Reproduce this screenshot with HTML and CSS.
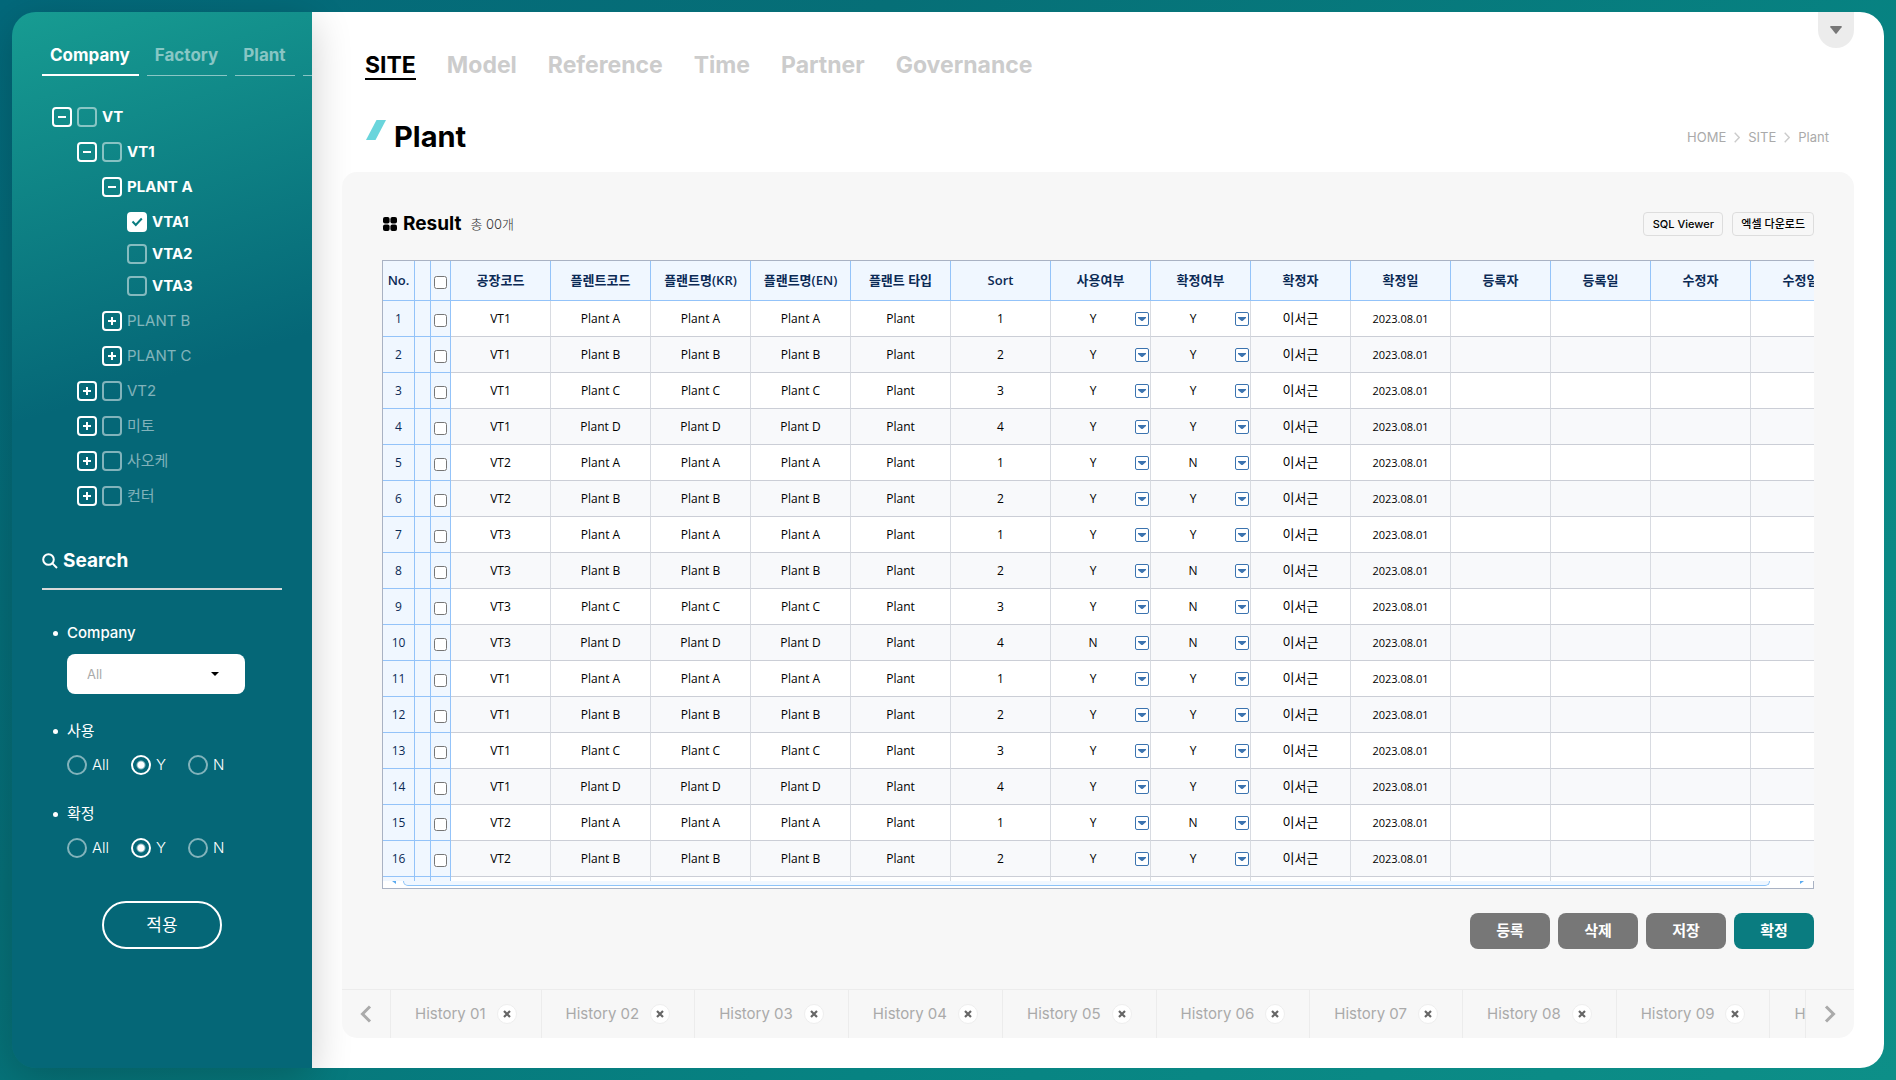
FILE: index.html
```html
<!DOCTYPE html>
<html lang="ko">
<head>
<meta charset="utf-8">
<meta name="viewport" content="width=device-width, initial-scale=1">
<title>Plant</title>
<link rel="stylesheet" href="styles.css">
</head>
<body>
<div class="frame">
  <aside class="sidebar">
    <nav class="side-tabs">
      <a class="side-tab active" href="#">Company</a>
      <a class="side-tab" href="#">Factory</a>
      <a class="side-tab" href="#">Plant</a>
      <a class="side-tab next" href="#" aria-label="Next"></a>
    </nav>

    <ul class="tree">
      <li class="node open"><button class="toggle minus" aria-label="VT"></button><label><input type="checkbox" class="box">VT</label></li>
      <li class="node open lv1"><button class="toggle minus" aria-label="VT1"></button><label><input type="checkbox" class="box">VT1</label></li>
      <li class="node open lv2"><button class="toggle minus" aria-label="PLANT A"></button><span>PLANT A</span></li>
      <li class="leaves">
        <label class="node open"><input type="checkbox" class="box" checked>VTA1</label>
        <label class="node open"><input type="checkbox" class="box">VTA2</label>
        <label class="node open"><input type="checkbox" class="box">VTA3</label>
      </li>
      <li class="node lv2"><button class="toggle plus" aria-label="PLANT B"></button><span>PLANT B</span></li>
      <li class="node lv2"><button class="toggle plus" aria-label="PLANT C"></button><span>PLANT C</span></li>
      <li class="node lv1"><button class="toggle plus" aria-label="VT2"></button><label><input type="checkbox" class="box">VT2</label></li>
      <li class="node lv1"><button class="toggle plus" aria-label="미토"></button><label><input type="checkbox" class="box">미토</label></li>
      <li class="node lv1"><button class="toggle plus" aria-label="사오케"></button><label><input type="checkbox" class="box">사오케</label></li>
      <li class="node lv1"><button class="toggle plus" aria-label="컨터"></button><label><input type="checkbox" class="box">컨터</label></li>
    </ul>

    <form class="search">
      <h2 class="search-title">
        <svg width="16" height="16" viewBox="0 0 16 16" fill="none" stroke="#fff" stroke-width="2"><circle cx="6.5" cy="6.5" r="5.3"/><path d="M10.4 10.4 15 15"/></svg>
        Search
      </h2>
      <div class="field">
        <label class="field-name" for="company">Company</label>
        <select id="company" class="select"><option>All</option></select>
      </div>
      <fieldset class="field group">
        <legend class="field-name ko">사용</legend>
        <div class="radios">
          <label><input type="radio" name="use">All</label>
          <label><input type="radio" name="use" checked>Y</label>
          <label><input type="radio" name="use">N</label>
        </div>
      </fieldset>
      <fieldset class="field group">
        <legend class="field-name ko">확정</legend>
        <div class="radios">
          <label><input type="radio" name="confirm">All</label>
          <label><input type="radio" name="confirm" checked>Y</label>
          <label><input type="radio" name="confirm">N</label>
        </div>
      </fieldset>
      <button type="button" class="apply">적용</button>
    </form>
  </aside>

  <main class="main">
    <button class="pull" aria-label="menu"><svg width="12" height="8" viewBox="0 0 12 8"><path d="M.8 0h10.4q1 .3.4 1.2L6.6 7.6q-.6.6-1.2 0L.4 1.200Q-.2.3.8 0z" fill="#777"/></svg></button>
    <nav class="top-nav">
      <a class="active" href="#">SITE</a>
      <a href="#">Model</a>
      <a href="#">Reference</a>
      <a href="#">Time</a>
      <a href="#">Partner</a>
      <a href="#">Governance</a>
    </nav>
    <header class="title-row">
      <h1>
        <svg width="20" height="20" viewBox="0 0 20 20"><path d="M10.500 0H20L9.500 20H0z" fill="#6ad5dc"/></svg>
        Plant
      </h1>
      <nav class="crumbs">
        <a href="#">HOME</a>
        <svg width="6" height="11" viewBox="0 0 6 11" fill="none" stroke="#ccc" stroke-width="1.400"><path d="M.7.7 5.200 5.500.7 10.300"/></svg>
        <a href="#">SITE</a>
        <svg width="6" height="11" viewBox="0 0 6 11" fill="none" stroke="#ccc" stroke-width="1.400"><path d="M.7.7 5.200 5.500.7 10.300"/></svg>
        <a href="#">Plant</a>
      </nav>
    </header>

    <section class="panel">
      <div class="panel-body">
        <div class="result-head">
          <h2>
            <svg width="15" height="14" viewBox="0 0 15 14"><rect x="1" width="6.600" height="6.600" rx="2"/><rect x="8.400" width="6.600" height="6.600" rx="2"/><rect x="1" y="7.400" width="6.600" height="6.600" rx="2"/><rect x="8.400" y="7.400" width="6.600" height="6.600" rx="2"/></svg>
            Result
          </h2>
          <span class="count">총 00개</span>
          <button class="small-btn">SQL Viewer</button>
          <button class="small-btn">엑셀 다운로드</button>
        </div>

        <div class="grid">
          <div class="grid-view">
            <table>
              <colgroup><col class="c-no"><col class="c-state"><col class="c-check"><col span="14" class="c-data"></colgroup>
              <thead>
                <tr>
                  <th>No.</th><th></th><th><input type="checkbox" aria-label="전체"></th>
                  <th>공장코드</th><th>플렌트코드</th><th>플랜트명(KR)</th><th>플랜트명(EN)</th><th>플랜트 타입</th>
                  <th>Sort</th><th>사용여부</th><th>확정여부</th><th>확정자</th><th>확정일</th>
                  <th>등록자</th><th>등록일</th><th>수정자</th><th>수정일</th>
                </tr>
              </thead>
              <tbody id="rows"></tbody>
            </table>
          </div>
          <div class="grid-scroll">
            <svg width="5" height="4" viewBox="0 0 5 4"><path d="M0 0 4 3V0z" fill="#5aabf0"/></svg>
            <span class="thumb"></span>
            <svg width="5" height="4" viewBox="0 0 5 4"><path d="M5 0 1 3V0z" fill="#5aabf0"/></svg>
          </div>
        </div>

        <div class="actions">
          <button>등록</button>
          <button>삭제</button>
          <button>저장</button>
          <button class="primary">확정</button>
        </div>
      </div>

      <div class="history">
        <button class="arrow" aria-label="prev"><svg width="12" height="18" viewBox="0 0 12 18" fill="none" stroke="#aaa" stroke-width="3"><path d="M10 1.500 2.500 9 10 16.500"/></svg></button>
        <ul id="history"></ul>
        <button class="arrow" aria-label="next"><svg width="12" height="18" viewBox="0 0 12 18" fill="none" stroke="#aaa" stroke-width="3"><path d="M2 1.500 9.500 9 2 16.500"/></svg></button>
      </div>
    </section>
  </main>
</div>
<script src="app.js"></script>
</body>
</html>
```
FILE: app.js
```js
// plant code, plant letter, sort, in use, confirmed
const plants = [
  ["VT1", "A", 1, "Y", "Y"], ["VT1", "B", 2, "Y", "Y"], ["VT1", "C", 3, "Y", "Y"], ["VT1", "D", 4, "Y", "Y"],
  ["VT2", "A", 1, "Y", "N"], ["VT2", "B", 2, "Y", "Y"], ["VT3", "A", 1, "Y", "Y"], ["VT3", "B", 2, "Y", "N"],
  ["VT3", "C", 3, "Y", "N"], ["VT3", "D", 4, "N", "N"], ["VT1", "A", 1, "Y", "Y"], ["VT1", "B", 2, "Y", "Y"],
  ["VT1", "C", 3, "Y", "Y"], ["VT1", "D", 4, "Y", "Y"], ["VT2", "A", 1, "Y", "N"], ["VT2", "B", 2, "Y", "Y"]
];

const yesNo = (value, name) =>
  `<td class="pick"><select aria-label="${name}"><option${value === "Y" ? " selected" : ""}>Y</option><option${value === "N" ? " selected" : ""}>N</option></select></td>`;

document.getElementById("rows").innerHTML = plants.map(([code, letter, sort, use, fixed], i) => `
  <tr>
    <td>${i + 1}</td><td></td><td><input type="checkbox" aria-label="${i + 1}"></td>
    <td>${code}</td><td>Plant ${letter}</td><td>Plant ${letter}</td><td>Plant ${letter}</td><td>Plant</td><td>${sort}</td>
    ${yesNo(use, "사용여부")}${yesNo(fixed, "확정여부")}
    <td class="name">이서근</td><td class="date">2023.08.01</td><td></td><td></td><td></td><td></td>
  </tr>`).join("") + `<tr>${"<td></td>".repeat(17)}</tr>`;

const cross = '<svg width="8" height="8" viewBox="0 0 8 8" stroke="#666" stroke-width="2.2"><path d="M1 1l6 6M7 1L1 7"/></svg>';
document.getElementById("history").innerHTML = Array.from({ length: 10 }, (_, i) => {
  const name = "History " + String(i + 1).padStart(2, "0");
  return `<li><a href="#">${name}</a><button aria-label="${name} close">${cross}</button></li>`;
}).join("");
```
FILE: styles.css
```css
* { box-sizing: border-box; }

body {
  margin: 0;
  min-height: 100vh;
  padding: 12px;
  display: flex;
  font-family: Inter, "Noto Sans CJK KR", sans-serif;
  font-size: 15px;
  line-height: 20px;
  color: #000;
  background: linear-gradient(135deg, #03687a 0%, #066f77 30%, #078382 65%, #0d8f88 100%);
}

a { color: inherit; text-decoration: none; }
button, select, input { font: inherit; color: inherit; margin: 0; }
button { padding: 0; border: 0; background: none; cursor: pointer; }
ul { list-style: none; margin: 0; padding: 0; }
h1, h2 { margin: 0; }
svg { display: block; flex: none; }

.frame {
  flex: 1;
  min-width: 0;
  display: flex;
}

/* sidebar: its shadow falls on the main area but stays under the panel */
.sidebar {
  position: relative;
  z-index: 1;
  flex: none;
  width: 300px;
  padding: 30px;
  color: #fff;
  border-radius: 24px 0 0 24px;
  background: linear-gradient(163deg, #179c92 0%, #056777 36%);
  box-shadow: 0 10px 40px rgba(0, 0, 0, .2);
}

.side-tabs {
  display: flex;
  gap: 8px;
  margin-right: -30px;
  overflow: hidden;
}
.side-tab {
  flex: none;
  height: 34px;
  padding: 3px 9px 0 8px;
  font-size: 17px;
  font-weight: 700;
  color: rgba(255, 255, 255, .5);
  border-bottom: 1px solid rgba(255, 255, 255, .5);
}
.side-tab.active { color: #fff; border-bottom: 2px solid #fff; }
.side-tab.next { width: 60px; }

.tree {
  display: flex;
  flex-direction: column;
  gap: 15px;
  padding: 31px 0 0 10px;
}
.node, .node label { display: flex; align-items: center; gap: 5px; }
.node { height: 20px; color: rgba(255, 255, 255, .5); }
.node.open { color: #fff; font-weight: 700; }
.lv1 { padding-left: 25px; }
.lv2 { padding-left: 50px; }
.leaves { display: flex; flex-direction: column; gap: 12px; padding-left: 75px; }

.toggle {
  display: flex;
  align-items: center;
  justify-content: center;
  width: 20px;
  height: 20px;
  border: 2px solid #fff;
  border-radius: 4px;
}
.minus { background: linear-gradient(#fff, #fff) center / 8px 2px no-repeat; }
.plus { background: linear-gradient(#fff, #fff) center / 8px 2px no-repeat, linear-gradient(#fff, #fff) center / 2px 8px no-repeat; }

.box {
  appearance: none;
  width: 20px;
  height: 20px;
  border: 2px solid rgba(255, 255, 255, .5);
  border-radius: 4px;
}
.box:checked {
  border-color: #fff;
  background: #fff url("data:image/svg+xml,%3Csvg xmlns='http://www.w3.org/2000/svg' width='12' height='10' fill='none' stroke='%230a7c80' stroke-width='2'%3E%3Cpath d='M1.5 4.5 4.8 8 10.800 1.500'/%3E%3C/svg%3E") center no-repeat;
}

.search { margin-top: 40px; display: flex; flex-direction: column; }
.search-title {
  display: flex;
  align-items: center;
  gap: 5px;
  height: 44px;
  padding-bottom: 12px;
  margin-bottom: 33px;
  font-size: 19px;
  line-height: 28px;
  font-weight: 700;
  border-bottom: 2px solid #d9d9d9;
}
.field { margin: 0 0 27px; padding: 0 0 0 25px; border: 0; min-width: 0; }
.field.group { margin-bottom: 29px; }
.field-name {
  display: flex;
  align-items: center;
  padding: 0;
  margin-left: -14px;
  font-weight: 500;
}
.field-name.ko { font-weight: 400; }
.field-name::before {
  content: "";
  width: 5px;
  height: 5px;
  margin-right: 9px;
  border-radius: 50%;
  background: #fff;
}
.select {
  appearance: none;
  display: block;
  width: 178px;
  height: 40px;
  margin-top: 11px;
  padding: 0 20px;
  font-size: 13px;
  color: #aaa;
  border: 0;
  border-radius: 8px;
  background: #fff url("data:image/svg+xml,%3Csvg xmlns='http://www.w3.org/2000/svg' width='8' height='4'%3E%3Cpath d='M0 0h8L4 4z'/%3E%3C/svg%3E") 144px 18px no-repeat;
}
.radios { display: flex; gap: 22px; margin-top: 14px; }
.radios label { display: flex; align-items: center; gap: 5px; font-weight: 300; }
.radios input {
  appearance: none;
  width: 20px;
  height: 20px;
  border: 2px solid rgba(255, 255, 255, .5);
  border-radius: 50%;
}
.radios input:checked { border-color: #fff; background: radial-gradient(circle, #fff 3px, transparent 5px); }
.apply {
  align-self: center;
  width: 120px;
  height: 48px;
  margin-top: 14px;
  font-weight: 400;
  font-size: 17px;
  border: 2px solid #fff;
  border-radius: 24px;
}

/* main */
.main {
  position: relative;
  flex: 1;
  min-width: 0;
  display: flex;
  flex-direction: column;
  padding: 30px;
  background: #fff;
  border-radius: 0 24px 24px 0;
}
.pull {
  position: absolute;
  top: 0;
  right: 30px;
  width: 36px;
  height: 36px;
  display: flex;
  align-items: center;
  justify-content: center;
  background: #ececec;
  border-radius: 0 0 18px 18px;
}
.top-nav {
  display: flex;
  gap: 31px;
  height: 38px;
  padding: 10px 0 0 23px;
  font-size: 23px;
  line-height: 27px;
  font-weight: 700;
  color: #ccc;
}
.top-nav .active { height: 28px; color: #000; border-bottom: 2px solid #000; }
.title-row {
  display: flex;
  align-items: center;
  justify-content: space-between;
  height: 92px;
  padding: 0 25px 0 24px;
}
.title-row h1 {
  display: flex;
  gap: 8px;
  padding-top: 22px;
  font-size: 29px;
  line-height: 34px;
  font-weight: 700;
}
.crumbs {
  display: flex;
  align-items: center;
  gap: 8px;
  padding-top: 22px;
  font-size: 13px;
  color: #aaa;
}

.panel {
  position: relative;
  z-index: 2;
  flex: 1;
  display: flex;
  flex-direction: column;
  background: #f7f7f7;
  border-radius: 15px;
  overflow: hidden;
}
.panel-body { flex: 1; padding: 40px 40px 38px; }
.result-head { display: flex; align-items: center; gap: 9px; height: 24px; margin-bottom: 24px; }
.result-head h2 { display: flex; align-items: center; gap: 6px; font-size: 19px; font-weight: 700; }
.count { margin-right: auto; font-size: 13px; font-weight: 300; color: #333; }
.small-btn {
  height: 24px;
  min-width: 80px;
  padding: 0 8px;
  font-size: 11px;
  font-weight: 500;
  border: 1px solid #ddd;
  border-radius: 4px;
}

/* data grid */
.grid {
  overflow: hidden;
  border: 1px solid #a9b2c3;
  border-right: 0;
  background: #fff;
}
.grid-view { height: 620px; overflow: hidden; }
.grid table {
  table-layout: fixed;
  width: 1468px;
  border-collapse: separate;
  border-spacing: 0;
  font-family: "Open Sans", "Noto Sans CJK KR", sans-serif;
  font-size: 12px;
  line-height: 18px;
}
.c-no { width: 32px; }
.c-state { width: 16px; }
.c-check { width: 20px; }
.c-data { width: 100px; }
.grid th, .grid td {
  height: 36px;
  padding: 0;
  text-align: center;
  border-right: 1px solid #d8dbe1;
  border-bottom: 1px solid #cbced6;
}
.grid th {
  height: 40px;
  padding-bottom: 2px;
  font-size: 13px;
  font-weight: 600;
  color: #0b2a55;
  background: #f0f7ff;
  border-color: #93c3f9;
}
.grid td:nth-child(-n+3) { color: #0b2a55; background: #f0f7ff; border-color: #93c3f9; }
.grid tr:nth-child(even) td:nth-child(n+4) { background: #f8f9fb; }
.grid input { display: block; width: 13px; height: 13px; margin: 4px 0 0 3px; }
.grid th input { margin-top: 5px; }
.grid .name { padding-bottom: 2px; font-size: 13px; }
.grid .date { font-size: 11px; }
.pick select {
  appearance: none;
  display: block;
  width: 100%;
  height: 35px;
  padding: 0 15px 0 0;
  text-align: center;
  text-align-last: center;
  border: 0;
  background: url("data:image/svg+xml,%3Csvg xmlns='http://www.w3.org/2000/svg' width='14' height='14'%3E%3Crect x='.5' y='.5' width='13' height='13' rx='1.500' fill='%23fff' stroke='%233b73af'/%3E%3Cpath d='M3 5h8v1L7.500 9h-1L3 6z' fill='%233b73af'/%3E%3C/svg%3E") right 1px center no-repeat;
}
.grid-scroll {
  display: flex;
  justify-content: space-between;
  height: 7px;
  padding: 0 9px;
  border-right: 1px solid #a9b2c3;
}
.thumb {
  flex: 1;
  height: 5px;
  margin: 0 29px 0 6px;
  border: 1px solid #8cc3f8;
  border-top: 0;
  border-radius: 0 0 6px 6px;
  background: #f0f7ff;
}

.actions { display: flex; justify-content: flex-end; gap: 8px; margin-top: 24px; }
.actions button {
  width: 80px;
  height: 36px;
  color: #fff;
  font-size: 15px;
  font-weight: 600;
  border-radius: 8px;
  background: #777;
}
.actions .primary { background: #0a7c80; }

/* history tabs */
.history { display: flex; height: 49px; border-top: 1px solid #ececec; }
.arrow {
  flex: none;
  width: 49px;
  display: flex;
  align-items: center;
  justify-content: center;
}
.arrow:first-child { border-right: 1px solid #ececec; }
.arrow:last-child { border-left: 1px solid #ececec; }
.history ul { flex: 1; min-width: 0; display: flex; overflow: hidden; }
.history li {
  flex: none;
  display: flex;
  align-items: center;
  gap: 11px;
  padding: 0 24px;
  color: #aaa;
  border-right: 1px solid #ececec;
}
.history li button {
  width: 20px;
  height: 20px;
  display: flex;
  align-items: center;
  justify-content: center;
  background: #fff;
  border: 1px solid #eee;
  border-radius: 50%;
}
```
